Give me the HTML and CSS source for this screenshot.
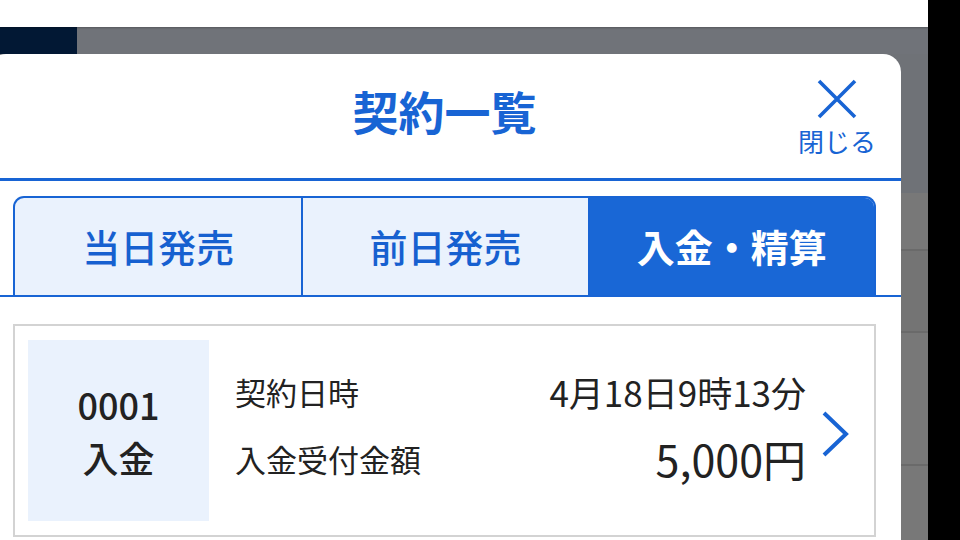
FILE: index.html
```html
<!DOCTYPE html>
<html lang="ja">
<head>
  <meta charset="UTF-8">
  <meta name="viewport" content="width=device-width, initial-scale=1">
  <title>契約一覧</title>
  <link rel="stylesheet" href="styles.css">
</head>
<body>
  <div class="screen">
    <div class="app">
      <div class="topbar"></div>
      <div class="under">
        <div class="under-nav"><span class="under-logo"></span></div>
        <div class="under-head"></div>
        <div class="under-row r1"></div>
        <div class="under-row r2"></div>
        <div class="under-row r3"></div>
        <div class="under-row r4"></div>
      </div>

      <div class="modal">
        <header class="modal-head">
          <span></span>
          <h1>契約一覧</h1>
          <button class="close" type="button">
            <svg width="40" height="40" viewBox="0 0 40 40">
              <path d="M2 2 L38 38 M38 2 L2 38" stroke="#1864d4" stroke-width="3.6" fill="none"/>
            </svg>
            <span>閉じる</span>
          </button>
        </header>

        <div class="tabbar">
          <nav class="tabs">
            <a class="tab">当日発売</a>
            <a class="tab">前日発売</a>
            <a class="tab active">入金・精算</a>
          </nav>
        </div>

        <div class="card">
          <div class="badge">
            <span>0001</span>
            <span>入金</span>
          </div>
          <div class="info">
            <div class="row">
              <span class="label">契約日時</span>
              <span class="value">4月18日9時13分</span>
            </div>
            <div class="row">
              <span class="label">入金受付金額</span>
              <span class="value big">5,000円</span>
            </div>
          </div>
          <svg class="chevron" width="30" height="48" viewBox="0 0 30 48">
            <path d="M4 3 L26 24 L4 45" stroke="#1864d4" stroke-width="4" fill="none"/>
          </svg>
        </div>
      </div>
    </div>
    <div class="edge"></div>
  </div>
</body>
</html>
```

FILE: styles.css
```css
body { margin: 0; font-family: "Noto Sans CJK JP", "Noto Sans", sans-serif; color: #222; background: #000; }
.screen { display: flex; height: 540px; overflow: hidden; }
.app { position: relative; width: 928px; display: flex; flex-direction: column; background: #777; overflow: hidden; }
.edge { flex: 1; background: #000; }

.topbar { height: 27px; background: #fff; box-shadow: 0 1px 2px rgba(0,0,0,0.25); position: relative; z-index: 1; }
.under { flex: 1; display: flex; flex-direction: column; }
.under-nav { height: 27px; background: #707379; display: flex; }
.under-logo { width: 77px; background: #021834; }
.under-head { height: 139px; background: #6f7277; }
.under-row { background: #787878; border-bottom: 2px solid #6a6a6a; }
.r1 { height: 56px; }
.r2 { height: 80px; background: #747474; }
.r3 { height: 131px; }
.r4 { flex: 1; border-bottom: none; }

.modal { position: absolute; top: 54px; left: -12px; right: 27px; bottom: 0; background: #fff; border-radius: 18px 18px 0 0; }

.modal-head { height: 127px; box-sizing: border-box; border-bottom: 3px solid #1864d4; display: grid; grid-template-columns: 1fr auto 1fr; align-items: center; padding: 0 25px 0 25px; }
.modal-head h1 { margin: 0; font-size: 46px; font-weight: 700; color: #1864d4; letter-spacing: 0; margin-top: -12px; }
.close { justify-self: end; background: none; border: none; padding: 0; margin-top: 0; display: flex; flex-direction: column; align-items: center; gap: 9px; font-family: inherit; font-size: 26px; color: #1864d4; cursor: pointer; line-height: 1; }
.close svg { width: 40px; height: 40px; }

.tabbar { padding: 15px 25px 0; border-bottom: 2px solid #1864d4; }
.tabs { display: grid; grid-template-columns: 1fr 1fr 1fr; height: 99px; box-sizing: border-box; border: 2px solid #1864d4; border-bottom: none; border-radius: 11px 11px 0 0; overflow: hidden; background: #eaf2fd; }
.tab { display: flex; align-items: center; justify-content: center; font-size: 38px; font-weight: 500; color: #1660d0; border-left: 2px solid #1864d4; padding-bottom: 2px; }
.tab:first-child { border-left: none; }
.tab.active { background: #1967d6; color: #fff; font-weight: 700; }

.card { margin: 27px 25px 0; border: 2px solid #d3d3d3; padding: 14px 24px 14px 13px; display: flex; align-items: center; }
.badge { width: 181px; height: 181px; flex: none; background: #eaf2fd; display: flex; flex-direction: column; align-items: center; justify-content: center; font-size: 36px; font-weight: 500; line-height: 53px; box-sizing: border-box; }
.info { flex: 1; margin-left: 26px; display: flex; flex-direction: column; gap: 10px; padding-bottom: 12px; }
.row { display: flex; justify-content: space-between; align-items: center; height: 57px; }
.label { font-size: 31px; }
.value { font-size: 35px; }
.value.big { font-size: 43px; }
.chevron { flex: none; margin-left: 14px; margin-top: 6px; }
```
